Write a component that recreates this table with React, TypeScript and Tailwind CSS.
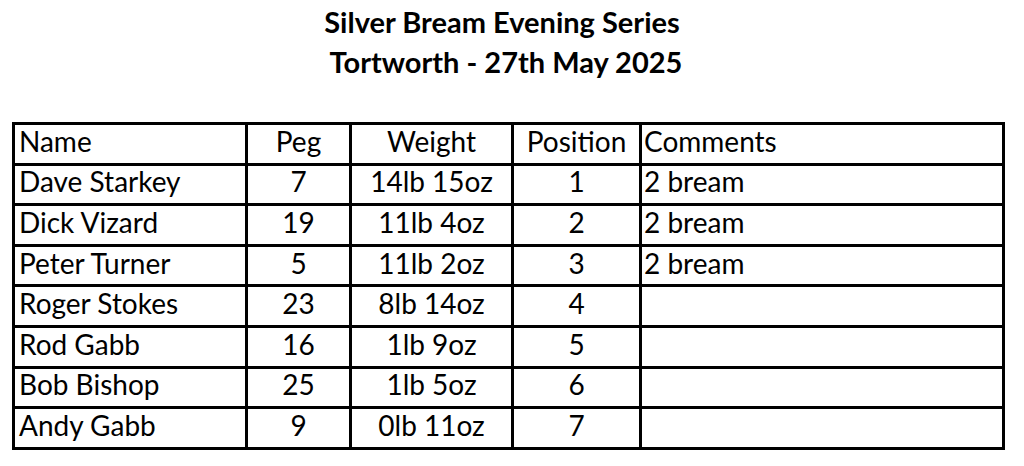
import React from "react";

const rows = [
  ["Dave Starkey", "7", "14lb 15oz", "1", "2 bream"],
  ["Dick Vizard", "19", "11lb 4oz", "2", "2 bream"],
  ["Peter Turner", "5", "11lb 2oz", "3", "2 bream"],
  ["Roger Stokes", "23", "8lb 14oz", "4", ""],
  ["Rod Gabb", "16", "1lb 9oz", "5", ""],
  ["Bob Bishop", "25", "1lb 5oz", "6", ""],
  ["Andy Gabb", "9", "0lb 11oz", "7", ""],
];

const cell = "border-[3px] border-black align-bottom p-0 pb-[6px] leading-[1.1] h-[40.6px]";

export default function App() {
  return (
    <div className="w-[1024px] h-[466px] bg-white text-black" style={{ fontFamily: "Lato, 'Open Sans', sans-serif" }}>
      <div className="pt-[2px] text-center font-bold text-[29px] leading-[40px] pr-[12px]">
        <div className="pr-[8px]">Silver Bream Evening Series</div>
        <div>Tortworth - 27th May 2025</div>
      </div>
      <table className="mt-[40px] ml-[12px] w-[990px] table-fixed border-collapse text-[28px]">
        <colgroup>
          <col className="w-[233px]" />
          <col className="w-[104px]" />
          <col className="w-[162px]" />
          <col className="w-[128px]" />
          <col className="w-[363px]" />
        </colgroup>
        <tbody>
          <tr>
            <td className={`${cell} pl-[4px] text-left`}>Name</td>
            <td className={`${cell} text-center`}>Peg</td>
            <td className={`${cell} text-center`}>Weight</td>
            <td className={`${cell} text-center`}>Position</td>
            <td className={`${cell} pl-[2px] text-left`}>Comments</td>
          </tr>
          {rows.map((r) => (
            <tr key={r[0]}>
              <td className={`${cell} pl-[4px] text-left`}>{r[0]}</td>
              <td className={`${cell} text-center`}>{r[1]}</td>
              <td className={`${cell} text-center`}>{r[2]}</td>
              <td className={`${cell} text-center`}>{r[3]}</td>
              <td className={`${cell} pl-[2px] text-left`}>{r[4]}</td>
            </tr>
          ))}
        </tbody>
      </table>
    </div>
  );
}
